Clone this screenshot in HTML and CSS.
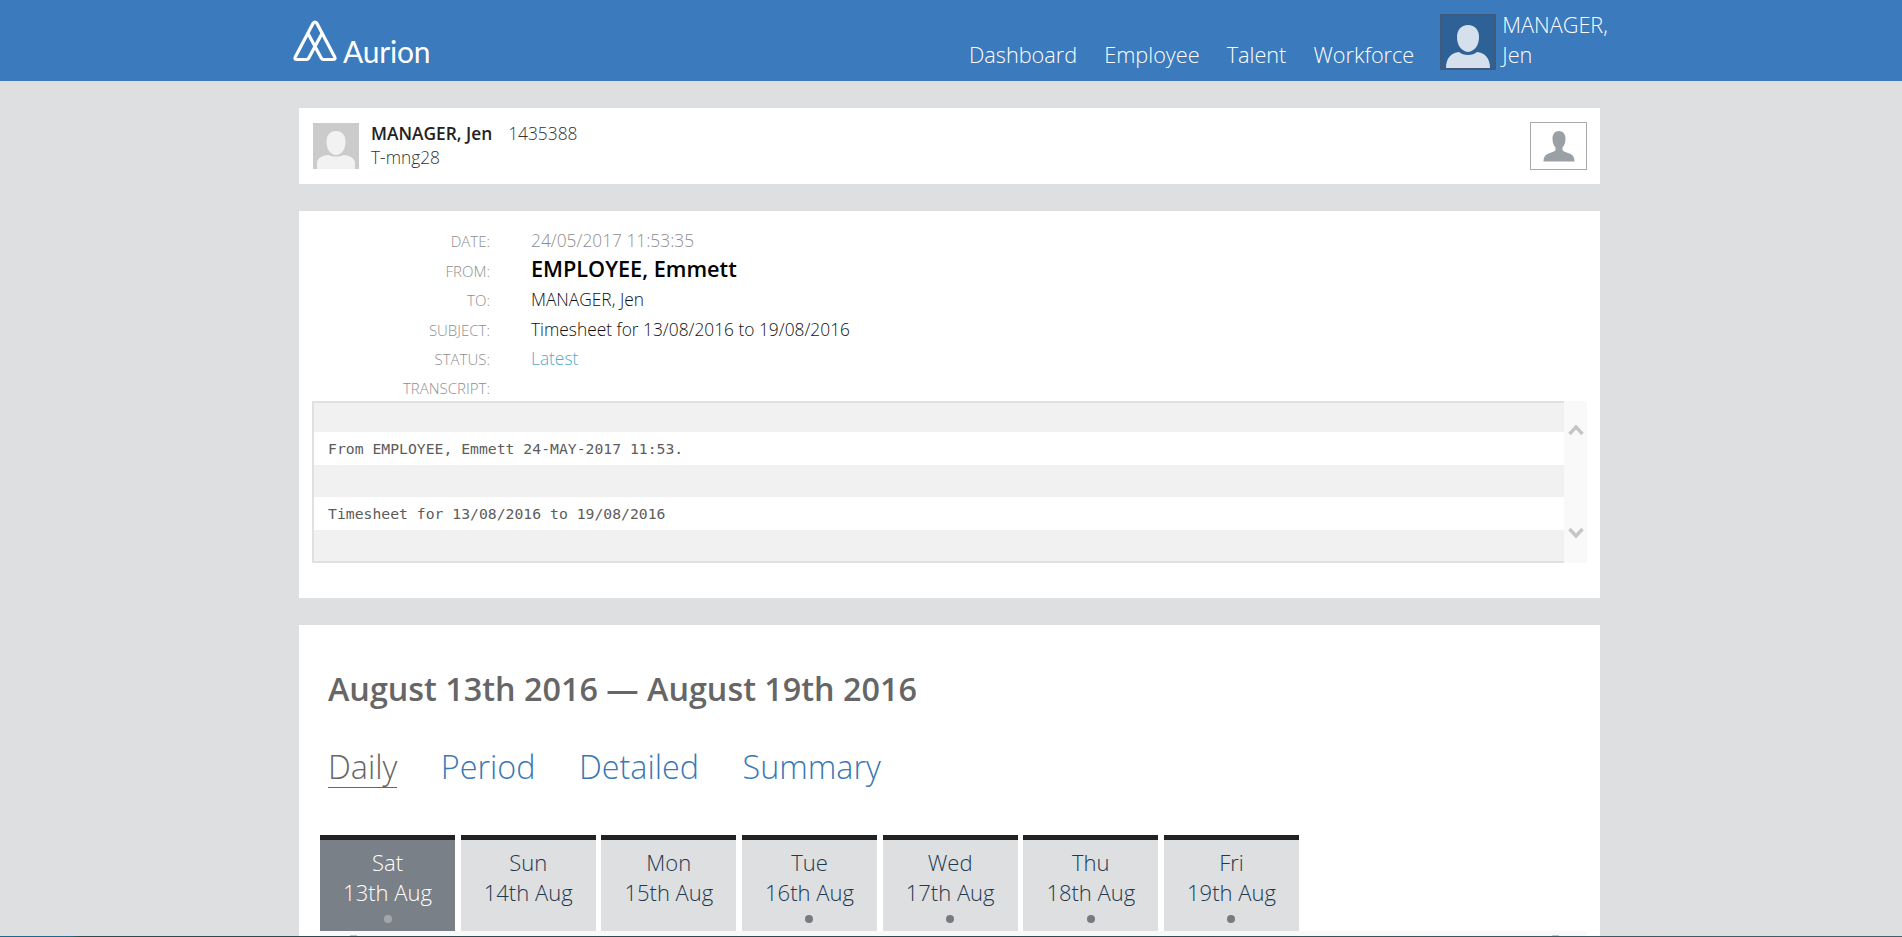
FILE: index.html
```html
<!DOCTYPE html>
<html lang="en">
<head>
<meta charset="utf-8">
<title>Aurion</title>
<link rel="stylesheet" href="styles.css">
</head>
<body>
<header class="topbar">
  <div class="topbar-inner">
    <a class="logo">
      <svg class="logo-mark" viewBox="0 0 46 43" fill="none" stroke="#fff" stroke-width="3.2" stroke-linejoin="round" stroke-linecap="round">
        <path d="M29.700 15 L16.800 39 Q16 40.500 14.500 40.500 H5 Q2 40.500 3.300 38 L21 4.500 Q23 1.500 25 4.500 L42.700 38 Q44 40.500 41 40.500 H31.500 Q30 40.500 29.200 39 L16.300 15"/>
      </svg>
      <span class="logo-text">Aurion</span>
    </a>
    <nav class="nav">
      <a>Dashboard</a>
      <a>Employee</a>
      <a>Talent</a>
      <a>Workforce</a>
    </nav>
    <div class="me">
      <div class="me-photo">
        <svg viewBox="0 0 52 52">
          <path class="me-person" d="M26 9c7 0 11 5 11 12 0 8-4 14-11 15-7-1-11-7-11-15 0-7 4-12 11-12z"/>
          <path class="me-person" d="M4 52C4 42 9 37 17 36c4 4 14 4 18 0 8 1 13 6 13 16z"/>
        </svg>
      </div>
      <div class="me-name">MANAGER, Jen</div>
    </div>
  </div>
</header>

<main class="page">
  <section class="card person-card">
    <div class="person-photo">
      <svg viewBox="0 0 46 46">
        <path fill="#f2f2f2" d="M23 8c6 0 9.500 4 9.500 11 0 7-4 13-9.500 13s-9.500-6-9.500-13c0-7 3.500-11 9.500-11z"/>
        <path fill="#f2f2f2" d="M4 46v-6c0-5 6-8 12-8 2 2 12 2 14 0 6 0 12 3 12 8v6z"/>
      </svg>
    </div>
    <div class="person-text">
      <div><strong class="person-name">MANAGER, Jen</strong><span class="person-id">1435388</span></div>
      <div class="person-code">T-mng28</div>
    </div>
    <button class="person-btn" type="button" aria-label="Profile">
      <svg viewBox="0 0 34 34"><path fill="#9aa0a5" d="M17 2c4 0 6.500 3 6.500 7.500 0 4-1 7-3 9v2.500c0 1.500 5 2.500 8 4 3 1.500 4 4 4 7.500H1.500c0-3.500 1-6 4-7.500 3-1.500 8-2.500 8-4v-2.500c-2-2-3-5-3-9C10.500 5 13 2 17 2z"/></svg>
    </button>
  </section>

  <section class="card message-card">
    <dl class="fields">
      <div class="field field-date"><dt>DATE:</dt><dd>24/05/2017 11:53:35</dd></div>
      <div class="field field-from"><dt>FROM:</dt><dd>EMPLOYEE, Emmett</dd></div>
      <div class="field"><dt>TO:</dt><dd>MANAGER, Jen</dd></div>
      <div class="field"><dt>SUBJECT:</dt><dd>Timesheet for 13/08/2016 to 19/08/2016</dd></div>
      <div class="field field-status"><dt>STATUS:</dt><dd>Latest</dd></div>
      <div class="field field-last"><dt>TRANSCRIPT:</dt><dd></dd></div>
    </dl>
    <div class="transcript">
      <div class="transcript-lines">
        <div class="line line-alt line-first"></div>
        <div class="line">From EMPLOYEE, Emmett 24-MAY-2017 11:53.</div>
        <div class="line line-alt"></div>
        <div class="line">Timesheet for 13/08/2016 to 19/08/2016</div>
        <div class="line line-alt line-last"></div>
      </div>
      <div class="scroller">
        <svg viewBox="0 0 16 13"><path d="M1.500 11 8 4l6.500 7" fill="none" stroke="#c6c6c6" stroke-width="3.400"/></svg>
        <svg viewBox="0 0 16 13"><path d="M1.500 2 8 9l6.500-7" fill="none" stroke="#c6c6c6" stroke-width="3.400"/></svg>
      </div>
    </div>
  </section>

  <section class="card sheet-card">
    <h1 class="sheet-title">August 13th 2016 — August 19th 2016</h1>
    <div class="tabs">
      <a class="tab tab-active">Daily</a>
      <a class="tab">Period</a>
      <a class="tab">Detailed</a>
      <a class="tab">Summary</a>
    </div>
    <div class="days">
      <div class="day day-active"><span>Sat</span><span>13th Aug</span><i class="dot"></i></div>
      <div class="day"><span>Sun</span><span>14th Aug</span></div>
      <div class="day"><span>Mon</span><span>15th Aug</span></div>
      <div class="day"><span>Tue</span><span>16th Aug</span><i class="dot"></i></div>
      <div class="day"><span>Wed</span><span>17th Aug</span><i class="dot"></i></div>
      <div class="day"><span>Thu</span><span>18th Aug</span><i class="dot"></i></div>
      <div class="day"><span>Fri</span><span>19th Aug</span><i class="dot"></i></div>
    </div>
    <div class="next-panel"><i class="tick"></i><i class="tick"></i></div>
  </section>
</main>
<div class="edge-line"></div>
</body>
</html>
```
FILE: styles.css
```css
* { box-sizing: border-box; }
html, body { margin: 0; height: 937px; overflow: hidden; }
body {
  background: #dddfe1;
  font-family: "Open Sans", sans-serif;
  font-weight: 300;
  color: #222;
}

.topbar { height: 81px; background: #3a7abd; color: #fff; }
.topbar-inner {
  width: 1316px;
  margin-left: 292px;
  height: 81px;
  display: flex;
  align-items: flex-start;
}
.logo { display: flex; align-items: flex-end; width: 677px; height: 62px; flex: none; }
.logo-mark { width: 46px; height: 43px; margin-top: 18px; flex: none; display: block; }
.logo-text {
  font-family: "Lato", sans-serif;
  font-weight: 400;
  font-size: 30px;
  line-height: 30px;
  margin-left: 5px;
  margin-bottom: -4px;
  letter-spacing: -0.2px;
}
.nav { display: flex; gap: 27px; font-size: 21.700px; line-height: 30px; margin-top: 40px; }
.me { display: flex; margin-left: 26px; margin-top: 14px; }
.me-photo {
  width: 56px;
  height: 56px;
  background: #2e6297;
  border: 2px solid #3f5a7c;
  flex: none;
}
.me-photo svg { display: block; width: 52px; height: 52px; }
.me-person { fill: #d6e0ec; }
.me-name { width: 110px; margin-left: 6px; font-size: 21.700px; line-height: 30px; margin-top: -4px; }

.page { width: 1301px; margin: 27px 0 0 299px; }
.card { background: #fff; margin-bottom: 27px; }

.person-card {
  height: 76px;
  padding: 14px 13px 0 14px;
  display: flex;
  align-items: flex-start;
}
.person-photo { width: 46px; height: 46px; background: #cbcbcb; flex: none; margin-top: 1px; }
.person-photo svg { display: block; width: 46px; height: 46px; }
.person-text { margin: -1px 0 0 12px; flex: 1; font-size: 17.330px; line-height: 24px; color: #333; }
.person-name { font-weight: 600; color: #222; }
.person-id { margin-left: 16px; }
.person-btn {
  width: 57px;
  height: 48px;
  padding: 0;
  background: #fff;
  border: 1.500px solid #aaa;
  display: flex;
  align-items: center;
  justify-content: center;
}
.person-btn svg { width: 34px; height: 34px; display: block; }

.message-card { height: 387px; padding: 15px 13px 0; }
.fields { margin: 0; }
.field { display: flex; align-items: baseline; height: 29.500px; line-height: 29.500px; }
.field-from { line-height: 26px; }
.field-last { height: 27.500px; }
.field dt {
  width: 178px;
  text-align: right;
  font-size: 15px;
  color: #8e8e8e;
}
.field dd { margin: 0 0 0 41px; font-size: 17.330px; color: #111; }
.field-date dd { color: #8e8e8e; }
.field-from dd { font-size: 21.670px; font-weight: 600; color: #000; }
.field-status dd { color: #55a9c9; }

.transcript { display: flex; height: 162px; }
.transcript-lines {
  flex: 1;
  border: solid #e0e0e0;
  border-width: 2px 0 2px 2px;
  background: #fff;
}
.line {
  height: 32.500px;
  padding-left: 14px;
  font-family: "DejaVu Sans Mono", monospace;
  font-weight: 400;
  font-size: 14.750px;
  line-height: 34px;
  color: #5c5c5c;
}
.line-alt { background: #f1f1f1; }
.line-first { height: 29px; }
.line-last { height: 31px; }
.scroller {
  width: 23px;
  background: #f9f9f9;
  display: flex;
  flex-direction: column;
  justify-content: space-between;
  align-items: center;
  padding: 22px 0 23px;
}
.scroller svg { width: 16px; height: 13px; display: block; }

.sheet-card { height: 312px; margin: 0; padding: 0 21px; overflow: hidden; }
.sheet-title {
  margin: 0 0 0 8px;
  padding-top: 41px;
  font-size: 32.330px;
  line-height: 44px;
  font-weight: 600;
  color: #666;
}
.tabs { display: flex; gap: 43.400px; margin: 34px 0 0 8px; height: 48px; }
.tab { font-size: 32.330px; line-height: 44px; color: #3a78b5; height: 44px; }
.tab-active { color: #666; border-bottom: 1px solid #666; }

.days { display: flex; gap: 5.670px; margin-top: 43px; }
.day {
  width: 135px;
  height: 96px;
  flex: none;
  background: #dddfe1;
  border-top: 5px solid #222;
  color: #22384f;
  display: flex;
  flex-direction: column;
  align-items: center;
  font-size: 22px;
  line-height: 30px;
  padding-top: 7px;
  position: relative;
}
.day-active { background: #7a8087; color: #fff; }
.dot {
  position: absolute;
  left: 50%;
  bottom: 8px;
  width: 8px;
  height: 8px;
  margin-left: -4px;
  border-radius: 50%;
  background: #777b80;
}
.day-active .dot { background: #a2a6aa; }
.next-panel {
  height: 6px;
  width: 1267px;
  background: #f9f9f9;
  display: flex;
  justify-content: space-between;
  padding: 4px 28px 0 30px;
}
.tick { width: 7px; height: 1px; background: #c6c6c6; display: block; }

.edge-line {
  position: fixed;
  left: 0;
  right: 0;
  bottom: 0;
  height: 1px;
  background: linear-gradient(90deg, #1d6a8a 0, #1d6a8a 70px, #2f4a50 80px, #2f4a50 1000px, #42606e 1902px);
}
```
